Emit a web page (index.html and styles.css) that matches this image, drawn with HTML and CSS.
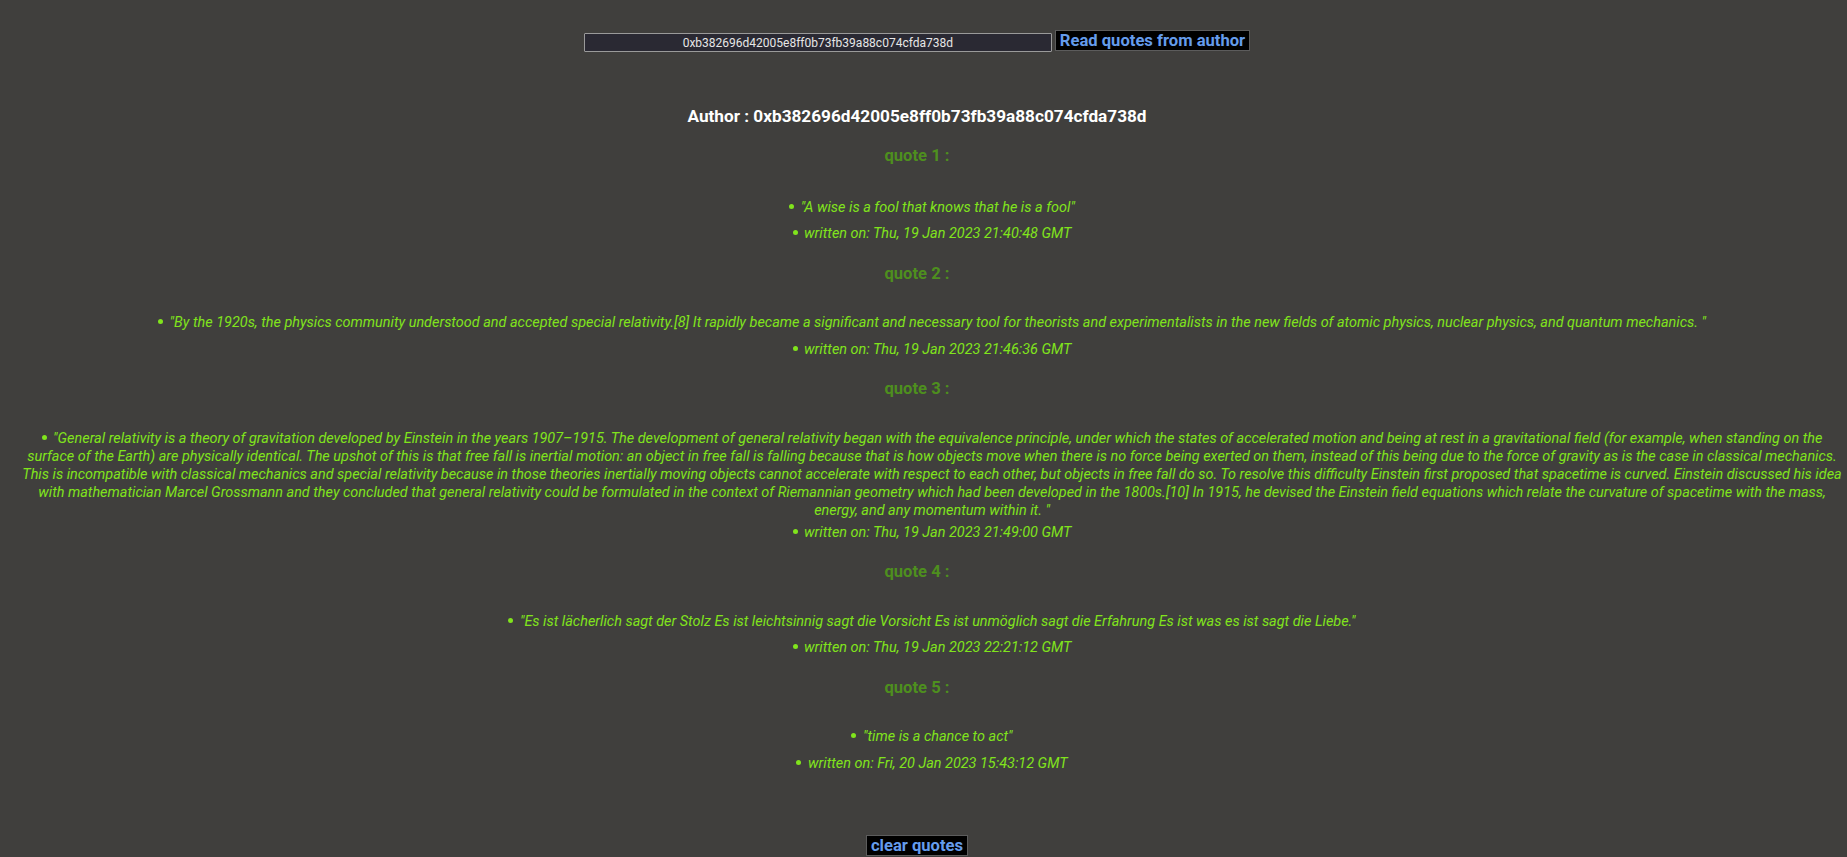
FILE: index.html
```html
<!DOCTYPE html>
<html>
<head>
<meta charset="utf-8">
<title>Quotes</title>
<link rel="stylesheet" href="styles.css">
</head>
<body>
<div class="app">
  <div class="search">
    <input class="author-input" type="text" value="0xb382696d42005e8ff0b73fb39a88c074cfda738d">
    <button class="btn" type="button">Read quotes from author</button>
  </div>

  <h2 class="author">Author : 0xb382696d42005e8ff0b73fb39a88c074cfda738d</h2>

  <section class="quote">
    <h3 class="quote-title">quote 1 :</h3>
    <ul class="quote-list">
      <li>"A wise is a fool that knows that he is a fool"</li>
      <li>written on: Thu, 19 Jan 2023 21:40:48 GMT</li>
    </ul>
  </section>

  <section class="quote">
    <h3 class="quote-title">quote 2 :</h3>
    <ul class="quote-list">
      <li>"By the 1920s, the physics community understood and accepted special relativity.[8] It rapidly became a significant and necessary tool for theorists and experimentalists in the new fields of atomic physics, nuclear physics, and quantum mechanics. "</li>
      <li>written on: Thu, 19 Jan 2023 21:46:36 GMT</li>
    </ul>
  </section>

  <section class="quote quote-long">
    <h3 class="quote-title">quote 3 :</h3>
    <ul class="quote-list">
      <li>"General relativity is a theory of gravitation developed by Einstein in the years 1907–1915. The development of general relativity began with the equivalence principle, under which the states of accelerated motion and being at rest in a gravitational field (for example, when standing on the surface of the Earth) are physically identical. The upshot of this is that free fall is inertial motion: an object in free fall is falling because that is how objects move when there is no force being exerted on them, instead of this being due to the force of gravity as is the case in classical mechanics. This is incompatible with classical mechanics and special relativity because in those theories inertially moving objects cannot accelerate with respect to each other, but objects in free fall do so. To resolve this difficulty Einstein first proposed that spacetime is curved. Einstein discussed his idea with mathematician Marcel Grossmann and they concluded that general relativity could be formulated in the context of Riemannian geometry which had been developed in the 1800s.[10] In 1915, he devised the Einstein field equations which relate the curvature of spacetime with the mass, energy, and any momentum within it. "</li>
      <li>written on: Thu, 19 Jan 2023 21:49:00 GMT</li>
    </ul>
  </section>

  <section class="quote">
    <h3 class="quote-title">quote 4 :</h3>
    <ul class="quote-list">
      <li>"Es ist lächerlich sagt der Stolz Es ist leichtsinnig sagt die Vorsicht Es ist unmöglich sagt die Erfahrung Es ist was es ist sagt die Liebe."</li>
      <li>written on: Thu, 19 Jan 2023 22:21:12 GMT</li>
    </ul>
  </section>

  <section class="quote">
    <h3 class="quote-title">quote 5 :</h3>
    <ul class="quote-list">
      <li>"time is a chance to act"</li>
      <li>written on: Fri, 20 Jan 2023 15:43:12 GMT</li>
    </ul>
  </section>

  <div class="footer">
    <button class="btn" type="button">clear quotes</button>
  </div>
</div>
</body>
</html>
```

FILE: styles.css
```css
html, body {
  margin: 0;
  padding: 0;
  background: #403f3d;
}

body {
  font-family: Roboto, "Liberation Sans", sans-serif;
  color: #ffffff;
}

.app {
  padding: 30px 0 40px 0;
}

.search {
  display: flex;
  justify-content: center;
  align-items: flex-start;
  gap: 3px;
  padding-right: 13px;
}

.author-input {
  box-sizing: border-box;
  width: 468px;
  height: 19px;
  margin: 3px 0 0 0;
  padding: 0 4px;
  background: #2a2933;
  border: 1px solid #9a9a9a;
  border-radius: 1px;
  color: #e6e6e6;
  font-family: Roboto, "Liberation Sans", sans-serif;
  font-size: 12px;
  line-height: 17px;
  text-align: center;
  outline: none;
}

.btn {
  box-sizing: border-box;
  margin: 0;
  padding: 0 4px;
  height: 21px;
  background: #000000;
  border: 1px solid #5c5c5c;
  border-radius: 0;
  color: #659cec;
  font-family: Roboto, "Liberation Sans", sans-serif;
  font-size: 16.6px;
  font-weight: 700;
  line-height: 19px;
  cursor: pointer;
}

.author {
  margin: 53px 0 0 0;
  padding-right: 13px;
  font-size: 17.2px;
  font-weight: 700;
  line-height: 22px;
  text-align: center;
  color: #ffffff;
}

.quote {
  display: flex;
  flex-direction: column;
}

.quote-title {
  margin: 19px 0 0 0;
  padding-right: 13px;
  font-size: 16.6px;
  font-weight: 700;
  line-height: 20px;
  text-align: center;
  color: #4e8f1e;
}

.quote + .quote .quote-title {
  margin-top: 20.5px;
}

.quote-list {
  margin: 30.5px 3px 0 -20px;
  padding-left: 40px;
  list-style: none;
  color: #80e41c;
  font-style: italic;
  font-size: 14.43px;
  line-height: 18px;
  text-align: center;
}

.quote-list li::before {
  content: "";
  display: inline-block;
  width: 5px;
  height: 5px;
  margin-right: 6.5px;
  border-radius: 50%;
  background: currentColor;
  vertical-align: 0.2em;
}

.quote:first-of-type .quote-list {
  margin-top: 32.5px;
}

.quote-list li + li {
  margin-top: 8.5px;
}

.quote-long .quote-list li + li {
  margin-top: 4px;
}

.footer {
  display: flex;
  justify-content: center;
  padding-right: 13px;
  margin-top: 62.5px;
}
```
